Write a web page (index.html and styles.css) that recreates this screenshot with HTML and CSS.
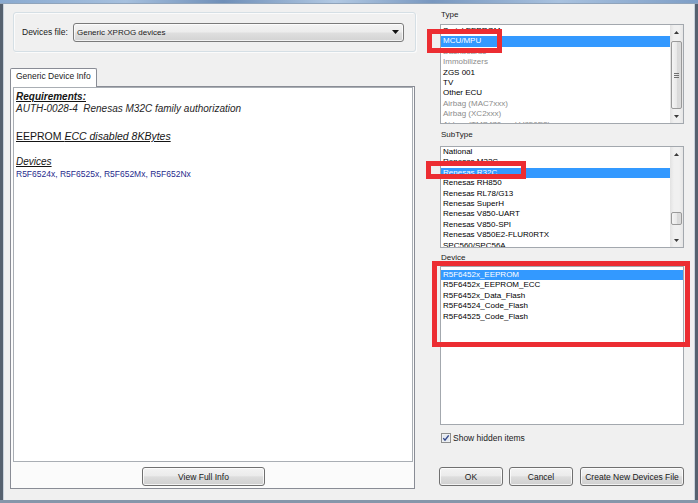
FILE: index.html
```html
<!DOCTYPE html>
<html lang="en">
<head>
<meta charset="utf-8">
<title>Devices</title>
<link rel="stylesheet" href="styles.css">
</head>
<body>
<div class="window">
  <div class="titlebar"></div>
  <div class="frame">
    <div class="client">
      <div class="left">
        <div class="group">
          <span class="field-label">Devices file:</span>
          <div class="combo">
            <span class="combo-text">Generic XPROG devices</span>
            <svg class="combo-arrow" width="7" height="4" viewBox="0 0 7 4"><path d="M0 0H7L3.5 4Z" fill="#111"/></svg>
          </div>
        </div>
        <div class="tabs">
          <div class="tabstrip"><div class="tab">Generic Device Info</div></div>
          <div class="panel">
            <div class="info">
              <p class="req">Requirements:</p>
              <p class="auth">AUTH-0028-4&nbsp; Renesas M32C family authorization</p>
              <p class="eeprom">EEPROM <i>ECC disabled 8KBytes</i></p>
              <p class="devhdr">Devices</p>
              <p class="devlist">R5F6524x, R5F6525x, R5F652Mx, R5F652Nx</p>
            </div>
            <div class="panel-foot">
              <button class="btn btn-info">View Full Info</button>
            </div>
          </div>
        </div>
      </div>

      <div class="right">
        <div class="lbl lbl-type">Type</div>
        <div class="listbox list-type">
          <div class="items items-type">
            <div class="item">Serial EEPROM</div>
            <div class="item sel">MCU/MPU</div>
            <div class="item dim">Dashboards</div>
            <div class="item dim">Immobilizers</div>
            <div class="item">ZGS 001</div>
            <div class="item">TV</div>
            <div class="item">Other ECU</div>
            <div class="item dim">Airbag (MAC7xxx)</div>
            <div class="item dim">Airbag (XC2xxx)</div>
            <div class="item dim">Airbag (TMS470 and V850E2)</div>
          </div>
          <div class="vscroll">
            <div class="sb-btn"><svg width="5" height="3" viewBox="0 0 5 3"><path d="M0 3H5L2.5 0Z" fill="#3a3a3a"/></svg></div>
            <div class="sb-track">
              <div class="thumb" style="margin-top:2px;height:68px">
                <svg width="5" height="5" viewBox="0 0 5 5"><path d="M0 0.5H5M0 2.5H5M0 4.5H5" stroke="#707070" stroke-width="1"/></svg>
              </div>
            </div>
            <div class="sb-btn"><svg width="5" height="3" viewBox="0 0 5 3"><path d="M0 0H5L2.5 3Z" fill="#3a3a3a"/></svg></div>
          </div>
        </div>

        <div class="lbl lbl-sub">SubType</div>
        <div class="listbox list-sub">
          <div class="items">
            <div class="item">National</div>
            <div class="item">Renesas M32C</div>
            <div class="item sel">Renesas R32C</div>
            <div class="item">Renesas RH850</div>
            <div class="item">Renesas RL78/G13</div>
            <div class="item">Renesas SuperH</div>
            <div class="item">Renesas V850-UART</div>
            <div class="item">Renesas V850-SPI</div>
            <div class="item">Renesas V850E2-FLUR0RTX</div>
            <div class="item">SPC560/SPC56A</div>
          </div>
          <div class="vscroll">
            <div class="sb-btn"><svg width="5" height="3" viewBox="0 0 5 3"><path d="M0 3H5L2.5 0Z" fill="#3a3a3a"/></svg></div>
            <div class="sb-track">
              <div class="thumb" style="margin-top:51px;height:13px"></div>
            </div>
            <div class="sb-btn"><svg width="5" height="3" viewBox="0 0 5 3"><path d="M0 0H5L2.5 3Z" fill="#3a3a3a"/></svg></div>
          </div>
        </div>

        <div class="lbl lbl-dev">Device</div>
        <div class="listbox list-dev">
          <div class="items items-dev">
            <div class="item sel">R5F6452x_EEPROM</div>
            <div class="item">R5F6452x_EEPROM_ECC</div>
            <div class="item">R5F6452x_Data_Flash</div>
            <div class="item">R5F64524_Code_Flash</div>
            <div class="item">R5F64525_Code_Flash</div>
          </div>
        </div>

        <div class="check-row">
          <svg class="checkbox" width="10" height="10" viewBox="0 0 10 10">
            <rect x="0.5" y="0.5" width="9" height="9" fill="#f6f6f6" stroke="#8e8f8f"/>
            <rect x="1.5" y="1.5" width="7" height="7" fill="#e4e9f0"/>
            <path d="M2.3 5.1L4 7.1L7.7 2.4" fill="none" stroke="#33478a" stroke-width="1.4"/>
          </svg>
          <span>Show hidden items</span>
        </div>

        <div class="buttons">
          <button class="btn btn-ok">OK</button>
          <button class="btn btn-cancel">Cancel</button>
          <button class="btn btn-create">Create New Devices File</button>
        </div>
      </div>
    </div>
  </div>
  <div class="mark mark-type"></div>
  <div class="mark mark-sub"></div>
  <div class="mark mark-dev"></div>
</div>
</body>
</html>
```

FILE: styles.css
```css
* { box-sizing: border-box; }

html, body {
  margin: 0;
  padding: 0;
}

body {
  width: 698px;
  height: 503px;
  overflow: hidden;
  background: #f0f0f0;
  font-family: "Liberation Sans", Arial, sans-serif;
  font-size: 8.5px;
  color: #1a1a1a;
}

.window {
  position: relative;
  width: 698px;
  height: 503px;
  display: flex;
  flex-direction: column;
  background: #56616f;
}

.titlebar {
  height: 4px;
  flex: none;
  background: linear-gradient(90deg, #8aaad0 0%, #a6c0de 18%, #6f8fb8 32%, #b2c9e3 48%, #7897bf 62%, #a9c2df 80%, #7e9ec6 100%);
  border-bottom: 1px solid #90a4bb;
}

.frame {
  flex: 1;
  display: flex;
  padding: 0 3px;
  border-bottom: 3px solid #8596aa;
}

.client {
  flex: 1;
  display: flex;
  background: #f0f0f0;
  border-left: 1px solid #c9d2dc;
  border-right: 1px solid #c9d2dc;
}

/* ---------- left side ---------- */
.left {
  width: 406px;
  margin-left: 6px;
  display: flex;
  flex-direction: column;
}

.group {
  margin: 8px 0 0 3px;
  height: 40px;
  border: 1px solid #d5dfe5;
  border-radius: 3px;
  box-shadow: inset 1px 1px 0 #fbfbfb, 1px 1px 0 #fbfbfb;
  display: flex;
  align-items: center;
  padding: 0 11px 0 8px;
}

.field-label {
  white-space: nowrap;
}

.combo {
  margin-left: auto;
  width: 331px;
  height: 19px;
  border: 1px solid #7a7a7a;
  border-radius: 3px;
  background: linear-gradient(#f4f4f4, #ececec 48%, #dfdfdf 52%, #d3d3d3);
  box-shadow: inset 0 0 0 1px rgba(255, 255, 255, 0.7);
  display: flex;
  align-items: center;
  padding: 0 4px 0 3px;
  font-size: 8px;
}

.combo-text { flex: 1; white-space: nowrap; }
.combo-arrow { flex: none; }

.tabs {
  margin-top: 16px;
  width: 405px;
  display: flex;
  flex-direction: column;
}

.tabstrip { display: flex; }

.tab {
  position: relative;
  z-index: 1;
  width: 87px;
  height: 19px;
  margin-bottom: -1px;
  border: 1px solid #898c95;
  border-bottom: none;
  border-radius: 2px 2px 0 0;
  background: #ffffff;
  padding: 2px 0 0 5px;
  line-height: 11px;
  white-space: nowrap;
}

.panel {
  height: 403px;
  border: 1px solid #898c95;
  background: #fbfbfb;
  display: flex;
  flex-direction: column;
}

.info {
  height: 375px;
  margin: 0 1px 0 2px;
  border: 1px solid #a9aeb4;
  background: #ffffff;
  padding: 3px 0 0 2px;
  font-size: 10px;
  line-height: 12px;
  color: #151515;
}

.info p {
  margin: 0;
  white-space: nowrap;
}

.req {
  font-style: italic;
  font-weight: bold;
  text-decoration: underline;
}

.auth {
  font-style: italic;
  color: #262626;
}

.eeprom {
  margin-top: 15px !important;
  font-size: 10.5px;
  text-decoration: underline;
}

.devhdr {
  margin-top: 14px !important;
  font-style: italic;
  text-decoration: underline;
}

.devlist {
  font-size: 8.5px;
  line-height: 13px;
  color: #1f2b8c;
}

.panel-foot {
  flex: 1;
  padding: 5px 0 0 131px;
}

/* ---------- buttons ---------- */
.btn {
  height: 19px;
  padding: 0;
  border: 1px solid #707070;
  border-radius: 3px;
  background: linear-gradient(#f3f3f3, #ebebeb 46%, #dddddd 52%, #cfcfcf);
  box-shadow: inset 0 0 0 1px rgba(255, 255, 255, 0.75);
  font-family: "Liberation Sans", Arial, sans-serif;
  font-size: 8.5px;
  color: #1a1a1a;
  white-space: nowrap;
}

.btn-info { width: 123px; }

/* ---------- right side ---------- */
.right {
  width: 244px;
  margin-left: 24px;
  display: flex;
  flex-direction: column;
}

.lbl {
  height: 10px;
  line-height: 10px;
  font-size: 8px;
  padding-left: 1px;
}

.lbl-type { margin-top: 6px; }
.lbl-sub { margin-top: 6px; }
.lbl-dev { margin-top: 5px; }

.listbox {
  display: flex;
  border: 1px solid #a3a8ae;
  background: #ffffff;
  overflow: hidden;
  font-size: 8px;
}

.list-type { margin-top: 4px; height: 100px; }
.list-sub { margin-top: 6px; height: 102px; }
.list-dev { margin-top: 3px; height: 159px; }

.items {
  flex: 1;
  overflow: hidden;
}

.items-type { padding-top: 1px; }
.items-dev { padding-top: 3px; }

.item {
  height: 10.4px;
  line-height: 10.4px;
  padding-left: 2px;
  white-space: nowrap;
  color: #000000;
}

.item.dim { color: #8c8c8c; }

.item.sel {
  background: #3399ff;
  color: #ffffff;
}

.vscroll {
  width: 13px;
  flex: none;
  display: flex;
  flex-direction: column;
  background: linear-gradient(90deg, #e2e2e2, #f0f0f0 30%, #f0f0f0 70%, #e6e6e6);
}

.sb-btn {
  height: 14px;
  flex: none;
  display: flex;
  align-items: center;
  justify-content: center;
}

.sb-track {
  flex: 1;
  padding: 0 1px;
}

.thumb {
  border: 1px solid #999999;
  border-radius: 2px;
  background: linear-gradient(90deg, #f5f5f5, #e9e9e9 50%, #d9d9d9 50%, #dcdcdc);
  display: flex;
  align-items: center;
  justify-content: center;
}

.check-row {
  margin-top: 7px;
  height: 12px;
  padding-left: 1px;
  display: flex;
  align-items: center;
  gap: 2px;
  white-space: nowrap;
}

.checkbox { flex: none; }

.buttons {
  margin-top: 23px;
  margin-left: -1px;
  display: flex;
}

.btn-ok { width: 64px; }
.btn-cancel { width: 64px; margin-left: 6px; }
.btn-create { width: 104px; margin-left: 7px; }

/* ---------- annotation marks drawn over the screenshot ---------- */
.mark {
  position: absolute;
  border: 5px solid #ec2d32;
}

.mark-type { left: 427px; top: 29px; width: 75px; height: 24px; }
.mark-sub { left: 426px; top: 161px; width: 100px; height: 18px; }
.mark-dev { left: 432px; top: 261px; width: 258px; height: 86px; }
```
